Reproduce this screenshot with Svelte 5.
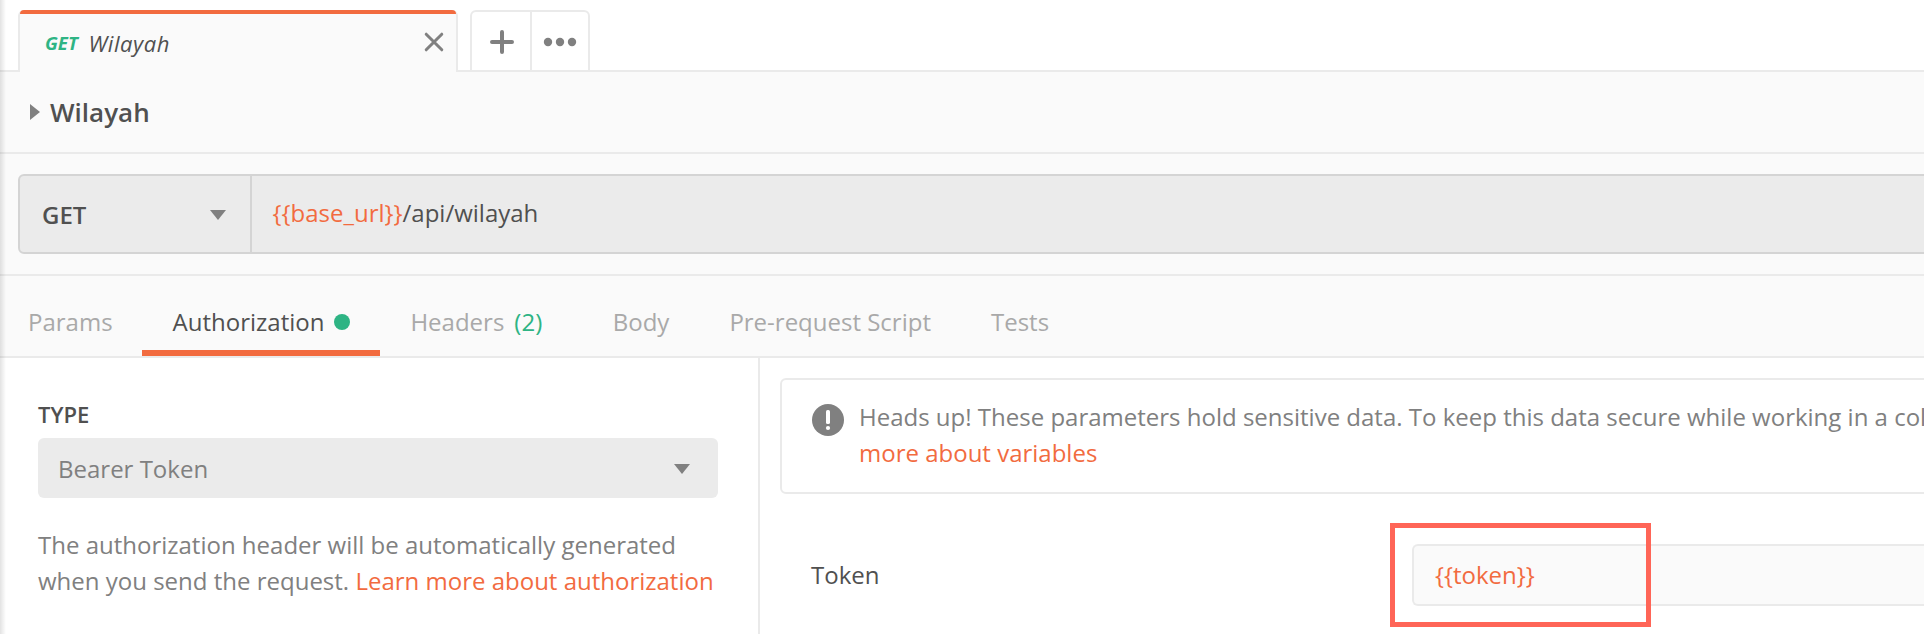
<script>
  const tabs = [
    { label: 'Params' },
    { label: 'Authorization', active: true, dot: true },
    { label: 'Headers', count: '(2)' },
    { label: 'Body' },
    { label: 'Pre-request Script' },
    { label: 'Tests' }
  ];
  const baseUrl = '{{base_url}}';
  const token = '{{token}}';
</script>

<div class="app">
  <header class="strip">
    <div class="gap-left"></div>
    <div class="tab">
      <span class="verb">GET</span>
      <span class="name">Wilayah</span>
      <svg class="close" width="20" height="20" viewBox="0 0 20 20"><path d="M2.2 2.2L17.8 17.8M17.8 2.2L2.2 17.8" /></svg>
    </div>
    <div class="gap-mid"></div>
    <div class="actions">
      <button aria-label="New tab">
        <svg width="24" height="24" viewBox="0 0 24 24"><path d="M12 2V22M2 12H22" /></svg>
      </button>
      <button aria-label="More">
        <svg width="34" height="10" viewBox="0 0 34 10"><circle cx="5" cy="5" r="4.2" /><circle cx="17" cy="5" r="4.2" /><circle cx="29" cy="5" r="4.2" /></svg>
      </button>
    </div>
    <div class="gap-rest"></div>
  </header>

  <div class="title">
    <svg width="10" height="16" viewBox="0 0 10 16"><path d="M0 0L10 8L0 16Z" /></svg>
    <h1>Wilayah</h1>
  </div>

  <div class="request">
    <div class="method">
      <span>GET</span>
      <svg width="16" height="10" viewBox="0 0 16 10"><path d="M0 0H16L8 10Z" /></svg>
    </div>
    <div class="url"><span class="var">{baseUrl}</span>/api/wilayah</div>
  </div>

  <nav>
    {#each tabs as t}
      <div class="item" class:active={t.active}>
        <span>{t.label}</span>
        {#if t.dot}<i class="dot"></i>{/if}
        {#if t.count}<span class="count">{t.count}</span>{/if}
      </div>
    {/each}
  </nav>

  <main>
    <section class="left">
      <div class="label">TYPE</div>
      <div class="select">
        <span>Bearer Token</span>
        <svg width="16" height="10" viewBox="0 0 16 10"><path d="M0 0H16L8 10Z" /></svg>
      </div>
      <p>The authorization header will be automatically generated<br />when you send the request. <span class="var">Learn more about authorization</span></p>
    </section>
    <section class="right">
      <div class="notice">
        <svg width="32" height="32" viewBox="0 0 32 32"><circle cx="16" cy="16" r="16" /><rect x="14" y="6" width="4" height="14" rx="1.6" fill="#fff" /><circle cx="16" cy="24" r="2.1" fill="#fff" /></svg>
        <p>Heads up! These parameters hold sensitive data. To keep this data secure while working in a collaborative<br /><span class="var">more about variables</span></p>
      </div>
      <div class="field">
        <span class="key">Token</span>
        <div class="input var">{token}<div class="mark"></div></div>
      </div>
    </section>
  </main>
  <div class="shade"></div>
</div>

<style>
  :global(body) { margin: 0; }
  .app {
    position: relative;
    box-sizing: border-box;
    width: 1924px;
    height: 634px;
    overflow: hidden;
    display: flex;
    flex-direction: column;
    background: #fafafa;
    color: #505050;
    font: 24px/36px "Open Sans", sans-serif;
  }
  .app :global(*) { box-sizing: border-box; }
  svg { display: block; flex: none; fill: #808080; }
  p, h1 { margin: 0; }
  .var { color: #f26b3f; }

  .strip { display: flex; height: 72px; padding-top: 10px; background: #fff; flex: none; }
  .gap-left { width: 18px; border-bottom: 2px solid #eaeaea; }
  .gap-mid { width: 12px; border-bottom: 2px solid #eaeaea; }
  .gap-rest { flex: 1; border-bottom: 2px solid #eaeaea; }
  .tab {
    position: relative;
    display: flex;
    align-items: center;
    width: 440px;
    padding: 4px 12px 0 25px;
    background: #fafafa;
    border: solid #eaeaea;
    border-width: 0 2px;
    border-radius: 6px 6px 0 0;
  }
  .tab::before {
    content: "";
    position: absolute;
    inset: 0 0 auto 0;
    height: 4px;
    background: #f26b3f;
    border-radius: 4px 4px 0 0;
  }
  .verb { width: 43.5px; font-size: 18.6px; font-weight: 700; font-style: italic; color: #2eb484; }
  .name { font-size: 22px; font-style: italic; letter-spacing: .55px; }
  .close { margin: -2px 0 0 auto; fill: none; stroke: #808080; stroke-width: 3; stroke-linecap: round; }
  .actions { display: flex; width: 120px; border: 2px solid #eaeaea; border-bottom-color: #eaeaea; border-radius: 6px 6px 0 0; }
  button { display: flex; align-items: center; justify-content: center; width: 58px; padding: 2px 0 0 2px; border: 0; background: none; }
  button + button { padding-left: 0; border-left: 2px solid #eaeaea; }
  button path { fill: none; stroke: #808080; stroke-width: 4; stroke-linecap: round; }

  .title { display: flex; align-items: center; gap: 10px; height: 82px; padding-left: 30px; border-bottom: 2px solid #eaeaea; flex: none; }
  h1 { font-size: 26px; font-weight: 600; }

  .request { display: flex; height: 122px; padding: 20px 0 20px 18px; border-bottom: 2px solid #eaeaea; flex: none; }
  .method, .url { display: flex; align-items: center; background: #ebebeb; border: 2px solid #d4d4d4; }
  .method { justify-content: space-between; width: 234px; padding: 2px 24px 0 22px; border-radius: 6px 0 0 6px; font-weight: 600; }
  .url { flex: 1; padding: 0 0 2px 20.5px; border-width: 2px 0 2px 0; }

  nav { display: flex; height: 82px; padding-top: 28px; border-bottom: 2px solid #eaeaea; color: #a9a9a9; flex: none; }
  .item { display: flex; height: 52px; padding: 0 30px; white-space: nowrap; }
  .item:first-child { padding: 0 29px 0 28px; }
  .active { padding-left: 31px; color: #505050; border-bottom: 6px solid #f26b3f; }
  .item:nth-child(3) { padding-right: 40.5px; }
  .dot { width: 16px; height: 16px; margin: 10px 0 0 10px; border-radius: 50%; background: #2eb484; }
  .count { margin-left: 10px; color: #2eb484; }

  main { display: flex; flex: 1; background: #fff; }
  .left { width: 760px; padding: 38px 0 0 38px; border-right: 2px solid #eaeaea; color: #808080; flex: none; }
  .label { height: 42px; font-size: 22px; font-weight: 600; color: #505050; }
  .select { display: flex; align-items: center; justify-content: space-between; width: 680px; height: 60px; padding: 2px 28px 0 20px; margin-bottom: 29px; border-radius: 6px; background: #ebebeb; }
  .right { flex: 1; padding: 20px 0 0 20px; min-width: 0; overflow: hidden; }
  .notice { display: flex; gap: 15px; width: 1400px; height: 116px; padding: 19px 0 0 30px; border: 2px solid #eaeaea; border-radius: 6px; color: #808080; }
  .notice svg { margin-top: 5px; }
  .notice p { white-space: nowrap; }
  .field { display: flex; align-items: center; margin-top: 50px; }
  .key { width: 632px; padding-left: 31px; flex: none; }
  .input { position: relative; flex: 1; height: 62px; padding: 11px 0 0 21px; border: 2px solid #eaeaea; border-right: 0; border-radius: 6px 0 0 6px; background: #fafafa; }
  .mark { position: absolute; left: -24.5px; top: -23px; width: 261px; height: 104px; border: 5px solid #ff6557; }
  .shade { position: absolute; inset: 0 auto 0 0; width: 6px; background: linear-gradient(to right, rgba(0,0,0,.11), rgba(0,0,0,0)); }
</style>
